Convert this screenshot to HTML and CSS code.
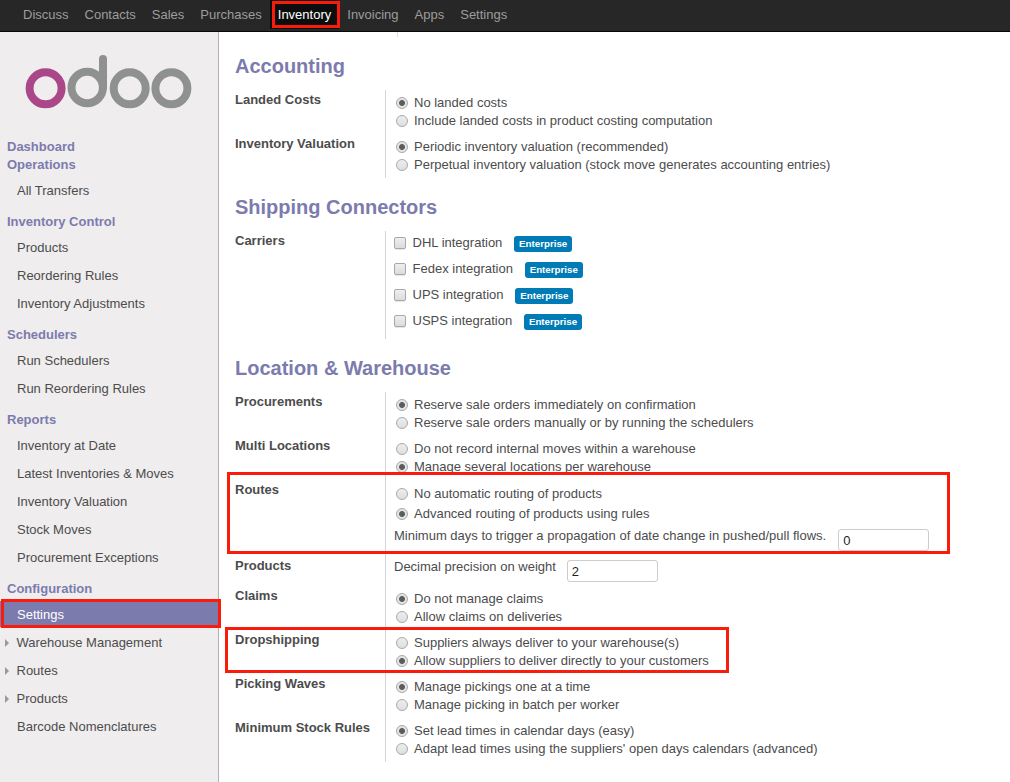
FILE: index.html
```html
<!DOCTYPE html>
<html lang="en">
<head>
<meta charset="utf-8">
<title>Inventory Settings - Odoo</title>
<link rel="stylesheet" href="styles.css">
</head>
<body>
<nav class="topbar">
  <a>Discuss</a><a>Contacts</a><a>Sales</a><a>Purchases</a><a class="active">Inventory</a><a>Invoicing</a><a>Apps</a><a>Settings</a>
</nav>
<div class="page">
  <aside class="sidebar">
    <svg class="logo" width="168" height="56" viewBox="0 0 168 56" fill="none" stroke="#8f9190" stroke-width="8">
      <circle cx="20.6" cy="34.3" r="16" stroke="#a94789"/>
      <circle cx="62.2" cy="33.5" r="15.7"/>
      <path d="M78 33.5V5" stroke-linecap="round"/>
      <circle cx="104.7" cy="34.3" r="16"/>
      <circle cx="146.4" cy="34.3" r="16"/>
    </svg>
    <h4 class="first">Dashboard</h4>
    <h4 class="second">Operations</h4>
    <ul><li>All Transfers</li></ul>
    <h4>Inventory Control</h4>
    <ul><li>Products</li><li>Reordering Rules</li><li>Inventory Adjustments</li></ul>
    <h4>Schedulers</h4>
    <ul><li>Run Schedulers</li><li>Run Reordering Rules</li></ul>
    <h4>Reports</h4>
    <ul><li>Inventory at Date</li><li>Latest Inventories &amp; Moves</li><li>Inventory Valuation</li><li>Stock Moves</li><li>Procurement Exceptions</li></ul>
    <h4>Configuration</h4>
    <ul><li class="selected">Settings</li><li class="parent">Warehouse Management</li><li class="parent">Routes</li><li class="parent">Products</li><li>Barcode Nomenclatures</li></ul>
  </aside>
  <main class="content">
    <div class="previous-group"></div>
    <h2>Accounting</h2>
    <section>
      <div class="row"><b>Landed Costs</b><div class="field">
        <label><i class="radio on"></i>No landed costs</label>
        <label><i class="radio"></i>Include landed costs in product costing computation</label></div></div>
      <div class="row"><b>Inventory Valuation</b><div class="field">
        <label><i class="radio on"></i>Periodic inventory valuation (recommended)</label>
        <label><i class="radio"></i>Perpetual inventory valuation (stock move generates accounting entries)</label></div></div>
    </section>
    <h2>Shipping Connectors</h2>
    <section>
      <div class="row"><b>Carriers</b><div class="field checks">
        <label><i class="check"></i><span>DHL integration</span><em>Enterprise</em></label>
        <label><i class="check"></i><span>Fedex integration</span><em>Enterprise</em></label>
        <label><i class="check"></i><span>UPS integration</span><em>Enterprise</em></label>
        <label><i class="check"></i><span>USPS integration</span><em>Enterprise</em></label></div></div>
    </section>
    <h2>Location &amp; Warehouse</h2>
    <section>
      <div class="row"><b>Procurements</b><div class="field">
        <label><i class="radio on"></i>Reserve sale orders immediately on confirmation</label>
        <label><i class="radio"></i>Reserve sale orders manually or by running the schedulers</label></div></div>
      <div class="row"><b>Multi Locations</b><div class="field">
        <label><i class="radio"></i>Do not record internal moves within a warehouse</label>
        <label><i class="radio on"></i>Manage several locations per warehouse</label></div></div>
      <div class="row"><b>Routes</b><div class="field routes">
        <label><i class="radio"></i>No automatic routing of products</label>
        <label><i class="radio on"></i>Advanced routing of products using rules</label>
        <div class="entry"><span>Minimum days to trigger a propagation of date change in pushed/pull flows.</span><input type="text" value="0"></div></div></div>
      <div class="row"><b>Products</b><div class="field precision">
        <div class="entry"><span>Decimal precision on weight</span><input type="text" value="2"></div></div></div>
      <div class="row"><b>Claims</b><div class="field">
        <label><i class="radio on"></i>Do not manage claims</label>
        <label><i class="radio"></i>Allow claims on deliveries</label></div></div>
      <div class="row"><b>Dropshipping</b><div class="field">
        <label><i class="radio"></i>Suppliers always deliver to your warehouse(s)</label>
        <label><i class="radio on"></i>Allow suppliers to deliver directly to your customers</label></div></div>
      <div class="row"><b>Picking Waves</b><div class="field">
        <label><i class="radio on"></i>Manage pickings one at a time</label>
        <label><i class="radio"></i>Manage picking in batch per worker</label></div></div>
      <div class="row"><b>Minimum Stock Rules</b><div class="field">
        <label><i class="radio on"></i>Set lead times in calendar days (easy)</label>
        <label><i class="radio"></i>Adapt lead times using the suppliers' open days calendars (advanced)</label></div></div>
    </section>
  </main>
</div>
<div class="mark mark-inventory"></div>
<div class="mark mark-settings"></div>
<div class="mark mark-routes"></div>
<div class="mark mark-dropshipping"></div>
</body>
</html>
```
FILE: styles.css
```css
* { box-sizing: border-box; }
body {
  margin: 0;
  height: 782px;
  overflow: hidden;
  position: relative;
  font: 13px/18px "Liberation Sans", Arial, sans-serif;
  color: #4c4c4c;
  background: #fff;
}
.topbar {
  display: flex;
  height: 32px;
  padding-left: 15px;
  background: #272727;
  border-bottom: 1px solid #080808;
}
.topbar a { height: 29px; padding: 6px 8px 0; color: #9d9d9d; }
.topbar .active { background: #0d0d0d; color: #fff; }
.page { display: flex; height: 750px; }
.sidebar {
  width: 219px;
  background: #efedee;
  border-right: 1px solid #afafb6;
}
.logo { display: block; margin: 22px 0 0 25px; }
.sidebar h4 {
  margin: 8px 0 3px;
  padding-left: 7px;
  font-size: 13px;
  line-height: 18px;
  color: #7c7bad;
}
.sidebar .first { margin: 28px 0 0; }
.sidebar .second { margin-top: 0; }
.sidebar ul { display: flow-root; list-style: none; margin: 0; padding: 0; }
.sidebar li { height: 26px; margin-bottom: 2px; padding: 5px 0 0 17px; }
.sidebar .selected { background: #7c7bad; color: #fff; }
.sidebar .parent { display: flex; padding-left: 5px; }
.parent::before {
  content: "";
  width: 4px;
  height: 8px;
  margin: 5px 7.5px 0 0;
  background: #999;
  clip-path: polygon(0 0, 100% 50%, 0 100%);
}
.content { flex: 1; padding-left: 16px; }
.previous-group { height: 5px; margin-left: 162px; border-left: 1px solid #ddd; }
h2 {
  margin: 17px 0 12px;
  font-size: 20px;
  line-height: 24px;
  color: #7c7bad;
}
.row { display: flex; }
.row b { width: 150px; padding-top: 1px; }
.field { flex: 1; padding: 4px 0 4px 8px; border-left: 1px solid #d5d5d5; }
.field label { display: flex; height: 18px; }
.radio {
  width: 12px;
  height: 12px;
  margin: 3px 6px 0 2px;
  border: 1px solid #a9a9a9;
  border-radius: 50%;
  background: linear-gradient(#ededed, #dedede);
}
.radio.on { background: radial-gradient(circle, #5c5c5c 0 2.5px, #e4e4e4 3.4px); }
.checks { padding: 3px 0 1px 8px; }
.checks label { height: 26px; }
.check {
  width: 12px;
  height: 12px;
  margin: 3px 6.5px 0 0;
  border: 1px solid #a8a8a8;
  border-radius: 2px;
  background: linear-gradient(#eee, #dcdcdc);
  box-shadow: 0 1px 1px #e5e5e5;
}
.checks em {
  width: 58px;
  height: 16px;
  margin: 2px 0 0 11.8px;
  border-radius: 3px;
  background: #007bb5;
  color: #fff;
  font: bold 9.75px/16px "Liberation Sans", Arial, sans-serif;
  text-align: center;
}
.routes { height: 76px; padding-top: 5px; }
.routes label { height: 20px; }
.entry { display: flex; }
.routes .entry { padding-top: 2px; }
.entry input {
  width: 91px;
  height: 22px;
  margin: 2px 0 0 12px;
  padding: 0 4px;
  border: 1px solid #ccc;
  border-radius: 3px;
  background: #fff;
  color: #1f1f1f;
  font: 13px "Liberation Sans", Arial, sans-serif;
}
.precision { height: 30px; padding-top: 2px; }
.precision input { margin-left: 11px; }
.mark { position: absolute; border: 3px solid #f91c0c; }
.mark-inventory { left: 272px; top: 1px; width: 68px; height: 27px; }
.mark-settings { left: 1px; top: 599px; width: 220px; height: 29px; }
.mark-routes { left: 227px; top: 472px; width: 723px; height: 82px; }
.mark-dropshipping { left: 225px; top: 627px; width: 504px; height: 46px; }
```
